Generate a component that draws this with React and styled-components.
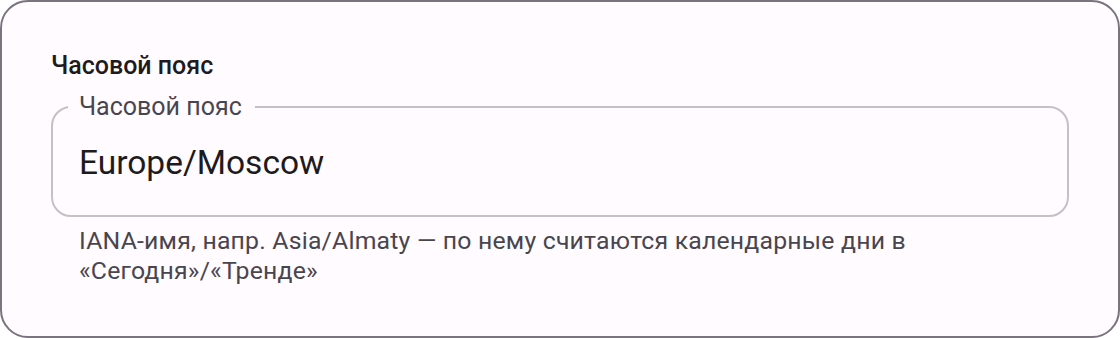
import React from "react";
import styled, { createGlobalStyle } from "styled-components";

const Global = createGlobalStyle`
  html, body { margin: 0; padding: 0; background: #ffffff; }
  body { font-family: Roboto, "Noto Sans", sans-serif; }
  * { box-sizing: border-box; }
`;

const Card = styled.section`
  width: 1120px;
  height: 338px;
  border: 2px solid #79747e;
  border-radius: 28px;
  background: #fffbfe;
  padding: 49px 49px 0 49px;
  display: flex;
  flex-direction: column;
`;

const Heading = styled.h2`
  margin: 0;
  font-family: Roboto, sans-serif;
  font-weight: 500;
  font-size: 25px;
  line-height: 30px;
  color: #1d1b20;
`;

const Field = styled.fieldset`
  margin: 11px 0 0 0;
  padding: 0 26px;
  border: 2px solid #c4c0c6;
  border-radius: 20px;
  height: 125px;
  min-width: 0;
`;

const Legend = styled.legend`
  padding: 0 13px 0 11px;
  margin-left: -11px;
  font-family: Roboto, sans-serif;
  font-size: 25px;
  line-height: 30px;
  color: #49454f;
`;

const Value = styled.div`
  padding-top: 21px;
  font-family: Roboto, sans-serif;
  font-size: 33.5px;
  line-height: 40px;
  color: #1d1b20;
`;

const Helper = styled.p`
  margin: 9px 0 0 0;
  padding: 0 60px 0 28px;
  font-family: Roboto, sans-serif;
  font-size: 24.8px;
  line-height: 30px;
  letter-spacing: 0.2px;
  color: #49454f;
`;

export default function App() {
  return (
    <>
      <Global />
      <Card>
        <Heading>Часовой пояс</Heading>
        <Field>
          <Legend>Часовой пояс</Legend>
          <Value>Europe/Moscow</Value>
        </Field>
        <Helper>
          IANA-имя, напр. Asia/Almaty — по нему считаются календарные дни в «Сегодня»/«Тренде»
        </Helper>
      </Card>
    </>
  );
}
